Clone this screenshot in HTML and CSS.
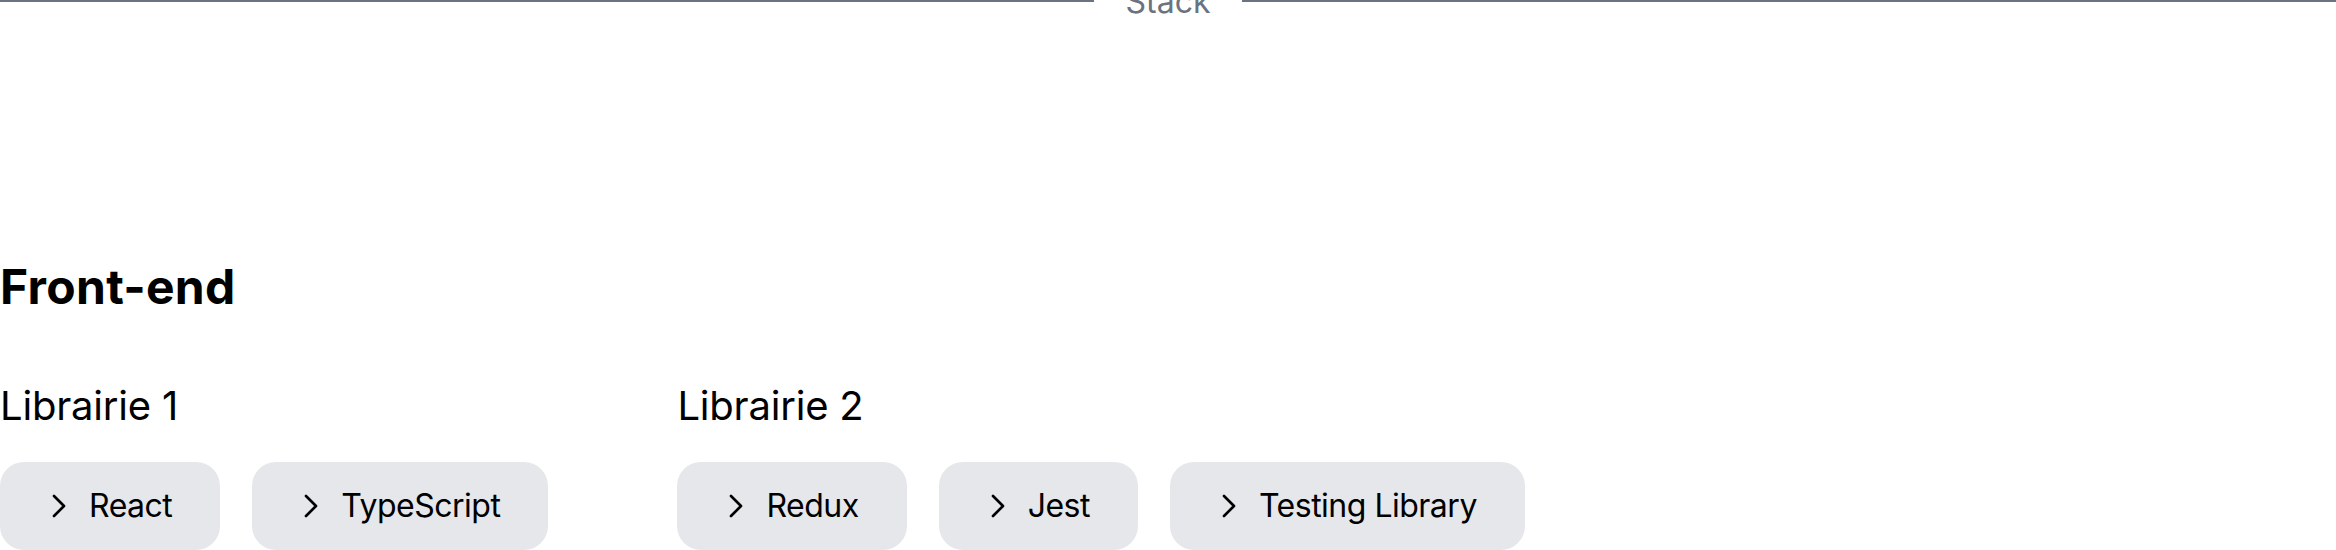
FILE: index.html
```html
<!DOCTYPE html>
<html lang="fr">
<head>
<meta charset="utf-8">
<title>Stack</title>
<link rel="stylesheet" href="styles.css">
</head>
<body>
  <div class="divider">
    <span class="divider-line"></span>
    <span class="divider-label">Stack</span>
    <span class="divider-line"></span>
  </div>

  <section class="stack-section">
    <h2 class="stack-title">Front-end</h2>
    <div class="groups">
      <div class="group">
        <h3 class="group-title">Librairie 1</h3>
        <ul class="tags">
          <li class="tag"><svg class="chevron" viewBox="0 0 24 24" fill="none" stroke="currentColor" stroke-width="2" stroke-linecap="round" stroke-linejoin="round"><path d="M8.25 4.5l7.5 7.5-7.5 7.5"/></svg><span>React</span></li>
          <li class="tag"><svg class="chevron" viewBox="0 0 24 24" fill="none" stroke="currentColor" stroke-width="2" stroke-linecap="round" stroke-linejoin="round"><path d="M8.25 4.5l7.5 7.5-7.5 7.5"/></svg><span>TypeScript</span></li>
        </ul>
      </div>
      <div class="group">
        <h3 class="group-title">Librairie 2</h3>
        <ul class="tags">
          <li class="tag"><svg class="chevron" viewBox="0 0 24 24" fill="none" stroke="currentColor" stroke-width="2" stroke-linecap="round" stroke-linejoin="round"><path d="M8.25 4.5l7.5 7.5-7.5 7.5"/></svg><span>Redux</span></li>
          <li class="tag"><svg class="chevron" viewBox="0 0 24 24" fill="none" stroke="currentColor" stroke-width="2" stroke-linecap="round" stroke-linejoin="round"><path d="M8.25 4.5l7.5 7.5-7.5 7.5"/></svg><span>Jest</span></li>
          <li class="tag"><svg class="chevron" viewBox="0 0 24 24" fill="none" stroke="currentColor" stroke-width="2" stroke-linecap="round" stroke-linejoin="round"><path d="M8.25 4.5l7.5 7.5-7.5 7.5"/></svg><span>Testing Library</span></li>
        </ul>
      </div>
    </div>
  </section>
</body>
</html>
```
FILE: styles.css
```css
html, body {
  margin: 0;
  padding: 0;
  background: #ffffff;
}

body {
  font-family: Inter, "Noto Sans", sans-serif;
  color: #000000;
}

.divider {
  display: flex;
  align-items: center;
  margin-top: -19px;
}

.divider-line {
  flex: 1;
  height: 2px;
  background: #6b7280;
}

.divider-label {
  padding: 2px 32px 0;
  font-size: 32px;
  line-height: 38px;
  color: #6b7280;
}

.stack-section {
  padding-top: 242px;
}

.stack-title {
  margin: 0 0 75px;
  font-size: 48px;
  line-height: 48px;
  font-weight: 700;
  letter-spacing: 0.3px;
}

.groups {
  display: flex;
  gap: 129px;
}

.group-title {
  margin: 0 0 36px;
  font-size: 40px;
  line-height: 40px;
  font-weight: 400;
  letter-spacing: -0.2px;
}

.tags {
  display: flex;
  gap: 32px;
  margin: 0;
  padding: 0;
  list-style: none;
}

.tag {
  display: flex;
  align-items: center;
  gap: 14px;
  padding: 24px 48px 24px 43px;
  background: #e5e7eb;
  border-radius: 24px;
  font-size: 32px;
  line-height: 40px;
  letter-spacing: -0.5px;
}

.chevron {
  width: 32px;
  height: 32px;
  flex: none;
}
```
